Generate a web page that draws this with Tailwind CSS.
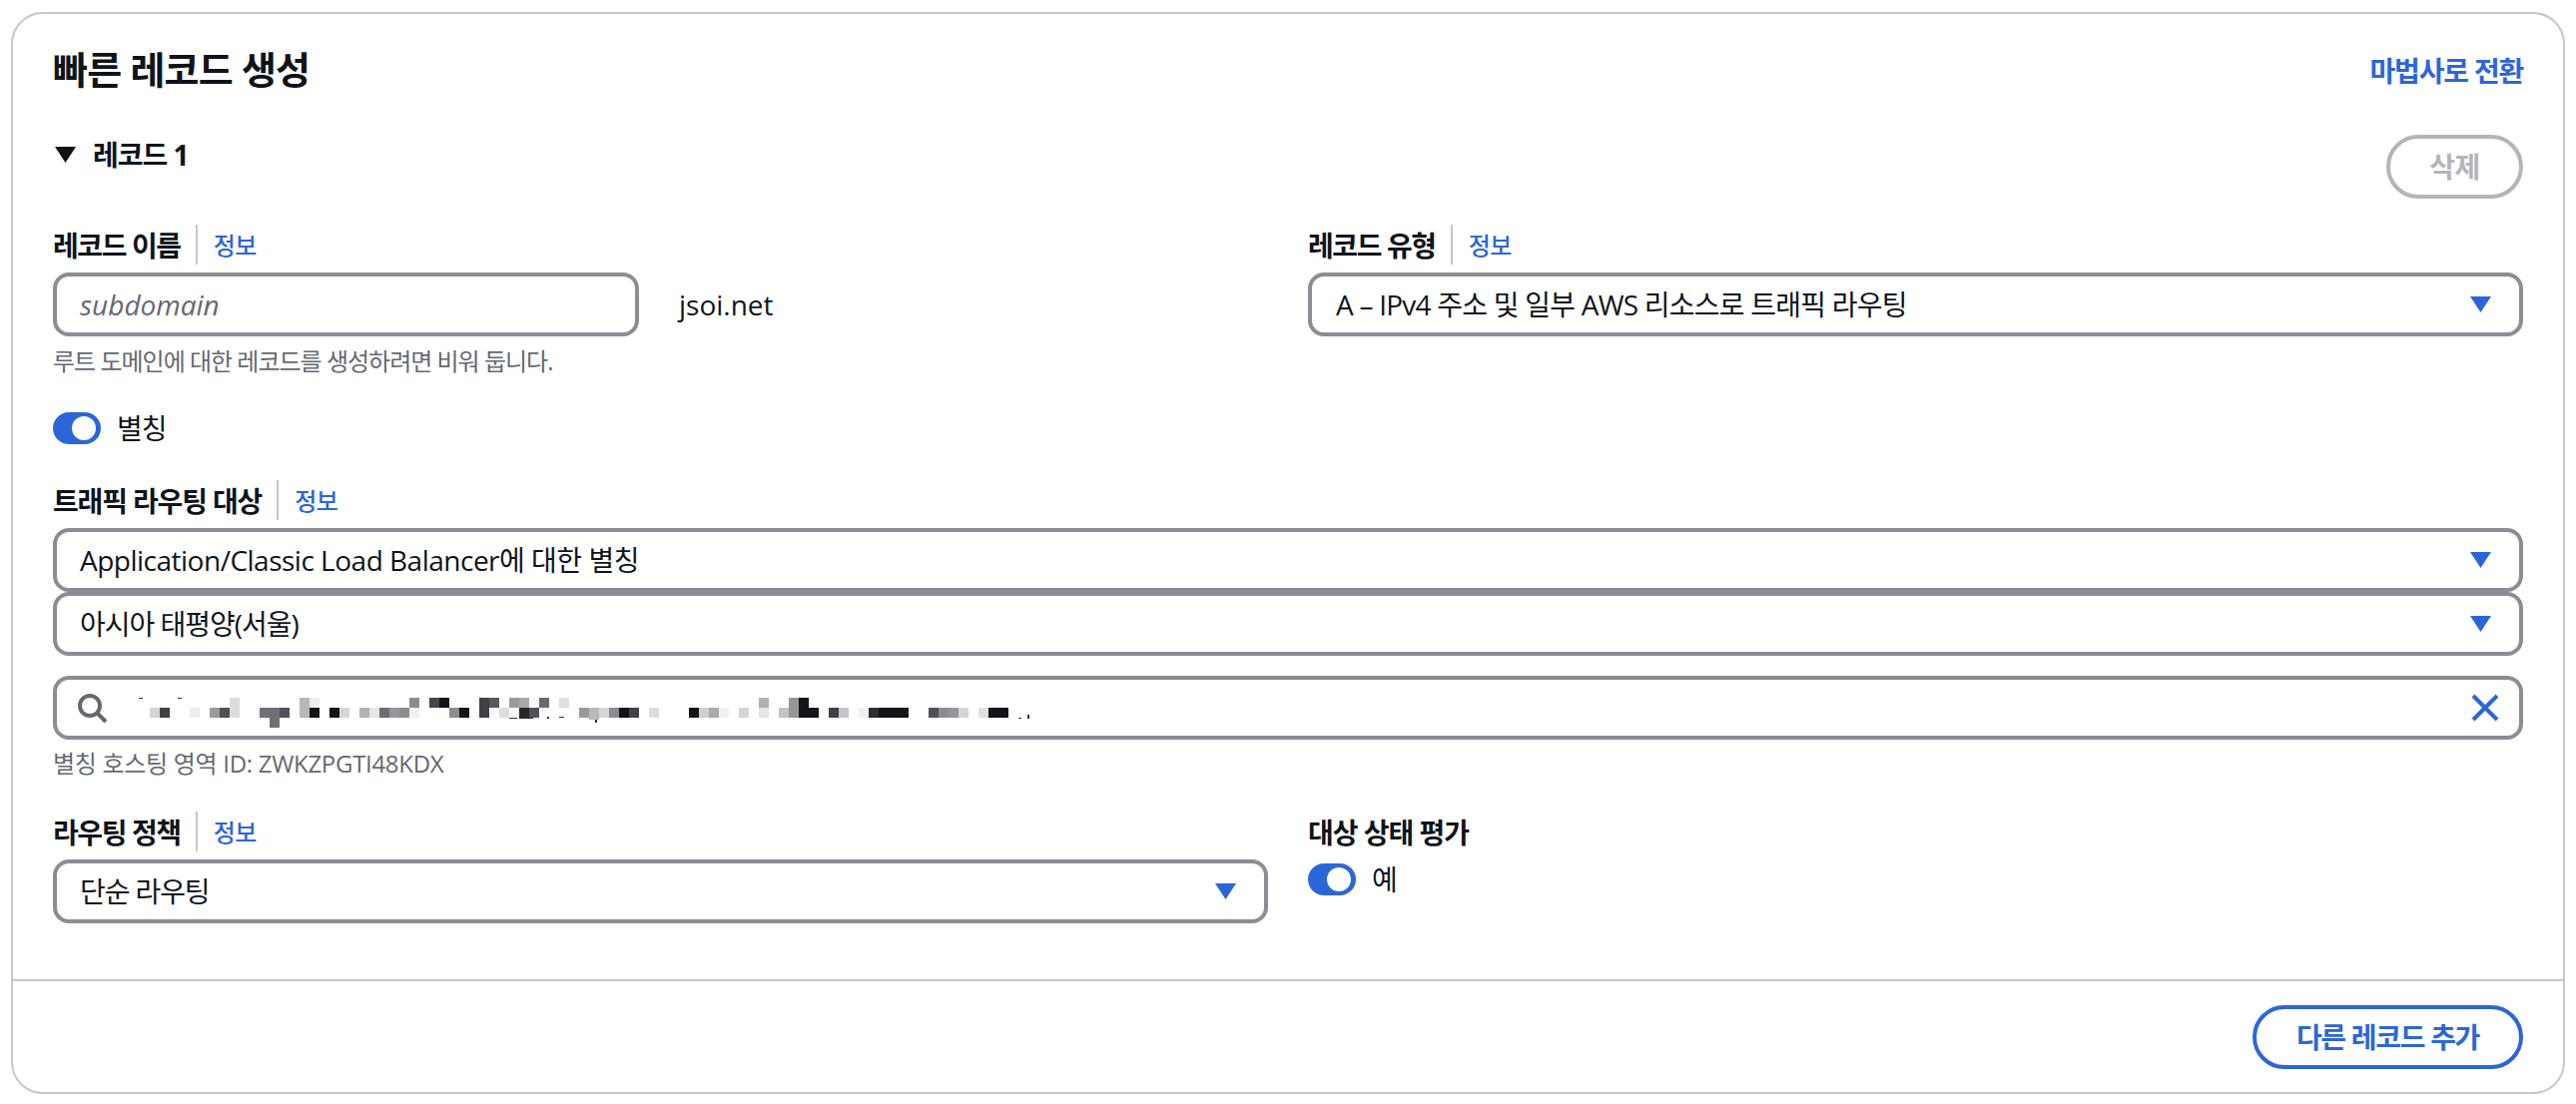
<!DOCTYPE html>
<html lang="ko">
<head>
<meta charset="utf-8">
<script src="https://cdn.jsdelivr.net/npm/@tailwindcss/browser@4"></script>
<title>빠른 레코드 생성</title>
</head>
<body class="bg-white font-['Open_Sans','Noto_Sans_CJK_KR',sans-serif] text-[#0f141a] text-[28px] leading-[40px]">
<div class="pt-[12px] pl-[11px]">
  <section class="w-[2558px] h-[1084px] border-2 border-[#c6c6cd] rounded-[32px] flex flex-col">
    <div class="px-[40px] pt-[30px]">
      <div class="flex justify-between h-[48px]">
        <h2 class="text-[38px] leading-[48px] font-bold tracking-[-0.8px] pt-[1px]">빠른 레코드 생성</h2>
        <a class="text-[#2b66d9] text-[28px] leading-[40px] font-semibold mt-[7px] tracking-[-1.2px]">마법사로 전환</a>
      </div>
      <div class="flex justify-between items-start mt-[43px] h-[64px]">
        <div class="flex items-center gap-[17px] h-[40px] font-bold pl-[2px]">
          <svg width="21" height="16" viewBox="0 0 21 16" class="block"><path d="M0 0h21L10.5 16z" fill="#0f141a"/></svg>
          <span class="tracking-[-1px]">레코드 1</span>
        </div>
        <button class="h-[64px] w-[137px] rounded-[32px] border-4 border-[#b4b4bb] text-[#b4b4bb] font-bold text-[28px] leading-none tracking-[-0.5px]">삭제</button>
      </div>

      <div class="grid grid-cols-2 gap-x-[40px] mt-[26px]">
        <div>
          <div class="flex items-center h-[40px]">
            <label class="font-bold tracking-[-1.4px] pt-[2px]">레코드 이름</label>
            <span class="w-[2px] h-[40px] bg-[#c6c6cd] ml-[15px] mr-[16px]"></span>
            <a class="text-[#2b66d9] text-[24px] font-medium tracking-[-0.5px] pt-[2px]">정보</a>
          </div>
          <div class="flex items-center mt-[8px]">
            <div class="w-[587px] h-[64px] border-4 border-[#8c8c94] rounded-[16px] flex items-center pl-[23px] pr-[24px] text-[#656871] italic">subdomain</div>
            <span class="ml-[40px]">jsoi.net</span>
          </div>
        </div>
        <div>
          <div class="flex items-center h-[40px]">
            <label class="font-bold tracking-[-1.4px] pt-[2px]">레코드 유형</label>
            <span class="w-[2px] h-[40px] bg-[#c6c6cd] ml-[15px] mr-[16px]"></span>
            <a class="text-[#2b66d9] text-[24px] font-medium tracking-[-0.5px] pt-[2px]">정보</a>
          </div>
          <div class="mt-[8px] h-[64px] border-4 border-[#8c8c94] rounded-[16px] flex items-center justify-between pl-[24px] pr-[28px]">
            <span class="tracking-[-0.77px]">A – IPv4 주소 및 일부 AWS 리소스로 트래픽 라우팅</span>
            <svg width="21" height="16" viewBox="0 0 21 16"><path d="M0 0h21L10.5 16z" fill="#2b66d9"/></svg>
          </div>
        </div>
      </div>
      <p class="mt-[9px] text-[24px] leading-[32px] text-[#656871] tracking-[-1px]">루트 도메인에 대한 레코드를 생성하려면 비워 둡니다.</p>

      <div class="flex items-center mt-[35px] h-[32px] gap-[16px]">
        <span class="relative block w-[48px] h-[32px] rounded-full bg-[#2b66d9]"><span class="absolute right-[5px] top-[4px] w-[24px] h-[24px] rounded-full bg-white"></span></span>
        <span class="tracking-[-1px]">별칭</span>
      </div>

      <div class="flex items-center h-[40px] mt-[36px]">
        <label class="font-bold tracking-[-1.15px] pt-[2px]">트래픽 라우팅 대상</label>
        <span class="w-[2px] h-[40px] bg-[#c6c6cd] ml-[15px] mr-[16px]"></span>
        <a class="text-[#2b66d9] text-[24px] font-medium tracking-[-0.5px] pt-[2px]">정보</a>
      </div>
      <div class="mt-[8px] h-[64px] border-4 border-[#8c8c94] rounded-[16px] flex items-center justify-between pl-[23px] pr-[28px]">
        <span class="tracking-[-0.5px]">Application/Classic Load Balancer에 대한 별칭</span>
        <svg width="21" height="16" viewBox="0 0 21 16"><path d="M0 0h21L10.5 16z" fill="#2b66d9"/></svg>
      </div>
      <div class="h-[64px] border-4 border-[#8c8c94] rounded-[16px] flex items-center justify-between pl-[23px] pr-[28px]">
        <span class="tracking-[-1px]">아시아 태평양(서울)</span>
        <svg width="21" height="16" viewBox="0 0 21 16"><path d="M0 0h21L10.5 16z" fill="#2b66d9"/></svg>
      </div>
      <div class="mt-[20px] h-[64px] border-4 border-[#8c8c94] rounded-[16px] flex items-center pl-[20px] pr-[19px]">
        <svg width="36" height="36" viewBox="0 0 36 36" class="shrink-0"><circle cx="13" cy="16" r="10" fill="none" stroke="#656871" stroke-width="4"/><path d="M20.5 23.5l8.5 8.5" fill="none" stroke="#656871" stroke-width="4"/></svg>
        <svg width="910" height="40" viewBox="130 689 910 40" class="ml-[17px] shrink-0" shape-rendering="crispEdges">
          <rect x="139" y="699" width="4" height="1" fill="#333"/><rect x="178" y="699" width="4" height="1" fill="#333"/>
          <rect x="230" y="699" width="10" height="20" fill="#dcdcdf"/><rect x="300" y="699" width="10" height="20" fill="#b8b8bb"/><rect x="310" y="699" width="10" height="10" fill="#eeeeee"/><rect x="410" y="699" width="10" height="10" fill="#8c8c92"/><rect x="430" y="699" width="10" height="10" fill="#43454d"/><rect x="440" y="699" width="10" height="10" fill="#111419"/>
          <rect x="150" y="709" width="10" height="10" fill="#d5d5d8"/><rect x="160" y="709" width="10" height="10" fill="#3f4147"/><rect x="190" y="709" width="10" height="10" fill="#eeeeee"/><rect x="210" y="709" width="10" height="10" fill="#9a9a9d"/><rect x="220" y="709" width="10" height="10" fill="#4e5056"/><rect x="260" y="709" width="20" height="10" fill="#6f7075"/><rect x="270" y="719" width="10" height="10" fill="#6f7075"/><rect x="280" y="709" width="10" height="10" fill="#50525a"/><rect x="310" y="709" width="10" height="10" fill="#111419"/><rect x="330" y="709" width="10" height="10" fill="#111419"/><rect x="340" y="709" width="10" height="10" fill="#d5d5d8"/><rect x="360" y="709" width="10" height="10" fill="#b3b3b5"/><rect x="370" y="709" width="10" height="10" fill="#e6e6e6"/><rect x="380" y="709" width="10" height="10" fill="#6c6c72"/><rect x="390" y="709" width="10" height="10" fill="#96969a"/><rect x="400" y="709" width="10" height="10" fill="#8c8c90"/><rect x="410" y="709" width="10" height="10" fill="#f0f0f0"/>
          <rect x="450" y="709" width="10" height="10" fill="#8c8c90"/><rect x="460" y="709" width="10" height="10" fill="#111419"/><rect x="480" y="699" width="10" height="20" fill="#3f4147"/><rect x="490" y="699" width="10" height="10" fill="#565860"/><rect x="500" y="709" width="10" height="10" fill="#dddddd"/><rect x="510" y="699" width="10" height="10" fill="#9a9a9d"/><rect x="520" y="699" width="10" height="10" fill="#a9a9ac"/><rect x="530" y="699" width="10" height="10" fill="#fafafa"/><rect x="540" y="699" width="10" height="10" fill="#68686e"/><rect x="560" y="699" width="10" height="10" fill="#dfdfdf"/>
          <rect x="520" y="709" width="10" height="10" fill="#24262c"/><rect x="530" y="709" width="10" height="10" fill="#50525a"/><rect x="580" y="709" width="10" height="10" fill="#9a9a9d"/><rect x="590" y="709" width="10" height="12" fill="#b9b9bc"/><rect x="600" y="709" width="10" height="10" fill="#d5d5d8"/><rect x="610" y="709" width="10" height="10" fill="#8c8c90"/><rect x="620" y="709" width="10" height="10" fill="#111419"/><rect x="630" y="709" width="10" height="10" fill="#3f4147"/><rect x="650" y="709" width="10" height="10" fill="#dddddd"/><rect x="690" y="709" width="10" height="10" fill="#111419"/><rect x="700" y="709" width="10" height="10" fill="#cfcfd2"/><rect x="710" y="709" width="10" height="10" fill="#a9a9ac"/><rect x="720" y="709" width="10" height="10" fill="#f0f0f0"/><rect x="740" y="709" width="10" height="10" fill="#d5d5d8"/>
          <rect x="760" y="699" width="10" height="10" fill="#b0b0b3"/><rect x="760" y="709" width="10" height="10" fill="#e6e6e6"/><rect x="780" y="709" width="10" height="10" fill="#c4c4c7"/><rect x="790" y="699" width="10" height="20" fill="#96969a"/><rect x="800" y="699" width="10" height="20" fill="#111419"/><rect x="810" y="709" width="10" height="10" fill="#111419"/><rect x="830" y="709" width="10" height="10" fill="#3f4147"/><rect x="840" y="709" width="10" height="10" fill="#c4c4c7"/><rect x="860" y="709" width="10" height="10" fill="#f0f0f0"/><rect x="870" y="709" width="10" height="10" fill="#2b2d33"/><rect x="880" y="709" width="30" height="10" fill="#111419"/><rect x="930" y="709" width="10" height="10" fill="#50525a"/><rect x="940" y="709" width="10" height="10" fill="#8c8c90"/><rect x="950" y="709" width="10" height="10" fill="#96969a"/><rect x="960" y="709" width="10" height="10" fill="#d5d5d8"/><rect x="980" y="709" width="10" height="10" fill="#e0e0e2"/><rect x="990" y="709" width="20" height="10" fill="#111419"/>
          <rect x="1020" y="719" width="3" height="1" fill="#333"/><rect x="1029" y="716" width="2" height="4" fill="#333"/><rect x="596" y="721" width="2" height="3" fill="#333"/><rect x="548" y="718" width="2" height="2" fill="#333"/><rect x="510" y="719" width="8" height="1" fill="#333"/><rect x="520" y="719" width="14" height="1" fill="#333"/><rect x="560" y="718" width="5" height="1" fill="#333"/>
        </svg>
        <svg width="30" height="30" viewBox="0 0 30 30" class="ml-auto shrink-0"><path d="M3 3l24 24M27 3L3 27" fill="none" stroke="#2b66d9" stroke-width="4"/></svg>
      </div>
      <p class="mt-[8px] text-[24px] leading-[32px] text-[#656871] tracking-[-0.3px]">별칭 호스팅 영역 ID: ZWKZPGTI48KDX</p>

      <div class="grid grid-cols-2 gap-x-[40px] mt-[32px]">
        <div>
          <div class="flex items-center h-[40px]">
            <label class="font-bold tracking-[-1.4px] pt-[2px]">라우팅 정책</label>
            <span class="w-[2px] h-[40px] bg-[#c6c6cd] ml-[15px] mr-[16px]"></span>
            <a class="text-[#2b66d9] text-[24px] font-medium tracking-[-0.5px] pt-[2px]">정보</a>
          </div>
          <div class="mt-[8px] h-[64px] border-4 border-[#8c8c94] rounded-[16px] flex items-center justify-between pl-[23px] pr-[28px]">
            <span class="tracking-[-1.1px]">단순 라우팅</span>
            <svg width="21" height="16" viewBox="0 0 21 16"><path d="M0 0h21L10.5 16z" fill="#2b66d9"/></svg>
          </div>
        </div>
        <div>
          <div class="flex items-center h-[40px]"><label class="font-bold tracking-[-1px] pt-[2px]">대상 상태 평가</label></div>
          <div class="flex items-center mt-[12px] h-[32px] gap-[16px]">
            <span class="relative block w-[48px] h-[32px] rounded-full bg-[#2b66d9]"><span class="absolute right-[5px] top-[4px] w-[24px] h-[24px] rounded-full bg-white"></span></span>
            <span>예</span>
          </div>
        </div>
      </div>
    </div>
    <div class="mt-[56px] border-t-2 border-[#c6c6cd] px-[40px] pt-[24px] flex justify-end">
      <button class="h-[64px] w-[271px] rounded-[32px] border-4 border-[#2b66d9] text-[#2b66d9] font-bold text-[28px] leading-none tracking-[-1.3px]">다른 레코드 추가</button>
    </div>
  </section>
</div>
</body>
</html>
